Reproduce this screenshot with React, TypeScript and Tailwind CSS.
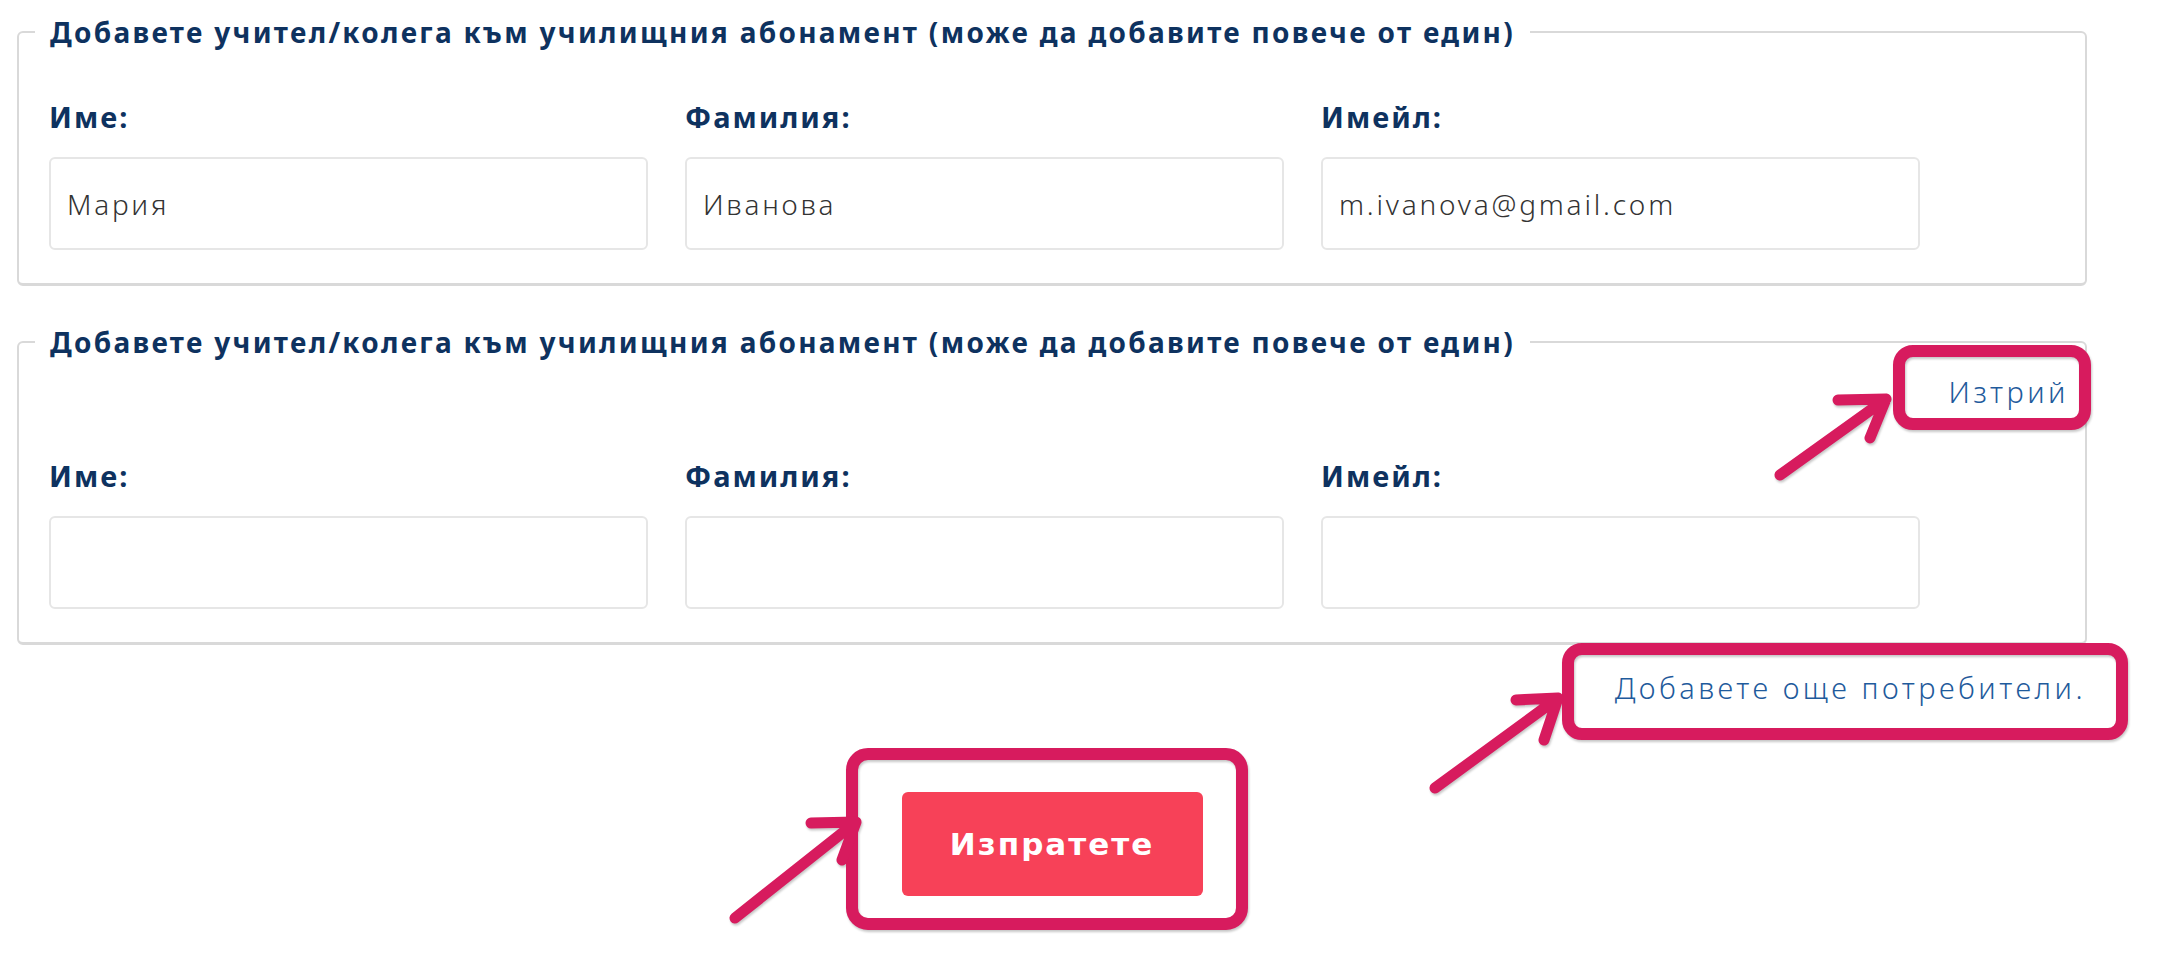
import React from 'react';

const legendText =
  'Добавете учител/колега към училищния абонамент (може да добавите повече от един)';

type Values = { first?: string; last?: string; email?: string };

function Field({ label, value }: { label: string; value?: string }) {
  return (
    <div className="flex flex-col">
      <label className="text-[29px] leading-[36px] font-bold tracking-[2px] text-[#0e325f]">{label}</label>
      <input
        readOnly
        defaultValue={value ?? ''}
        className="mt-[22px] h-[93px] w-full rounded-[6px] border-2 border-[#e6e6e6] bg-white px-[16px] text-[28px] font-light tracking-[2.8px] text-[#333333] outline-none"
      />
    </div>
  );
}

function UserFieldset({ values, removable }: { values: Values; removable?: boolean }) {
  return (
    <fieldset className="rounded-[6px] border-2 border-b-[3px] border-[#d9d9d9] px-[16px] pb-[33px]">
      <legend className="px-[15px] text-[28px] leading-[36px] font-bold tracking-[2.3px] text-[#0e325f]">
        {legendText}
      </legend>
      {removable && (
        <div className="mt-[14px] flex justify-end">
          <a href="#" className="text-[29px] leading-[36px] font-light tracking-[3.5px] text-[#1f5b9c]">
            Изтрий
          </a>
        </div>
      )}
      <div className={`${removable ? 'mt-[48px]' : 'mt-[49px]'} grid grid-cols-[599px_599px_599px] gap-x-[37px] pl-[14px]`}>
        <Field label="Име:" value={values.first} />
        <Field label="Фамилия:" value={values.last} />
        <Field label="Имейл:" value={values.email} />
      </div>
    </fieldset>
  );
}

function Annotations() {
  return (
    <svg
      className="pointer-events-none absolute left-0 top-0 drop-shadow-[1px_2px_1px_rgba(0,0,0,0.22)]"
      width="2177"
      height="962"
      viewBox="0 0 2177 962"
      fill="none"
    >
      <g stroke="#d71b5e" strokeLinecap="round" strokeLinejoin="round">
        <rect x="1899" y="351" width="186" height="73" rx="14" strokeWidth="12" />
        <rect x="1568" y="649" width="554" height="85" rx="14" strokeWidth="12" />
        <rect x="852" y="754" width="390" height="170" rx="16" strokeWidth="12" />
        <path d="M1780 475 L1886 399 M1838 400 L1886 399 L1870 438" strokeWidth="11" />
        <path d="M1435 788 L1558 698 M1516 700 L1558 698 L1544 740" strokeWidth="11" />
        <path d="M735 918 L856 822 M811 823 L856 822 L842 860" strokeWidth="11" />
      </g>
    </svg>
  );
}

export default function App() {
  return (
    <div
      lang="bg"
      className="relative h-[962px] w-[2177px] overflow-hidden bg-white pl-[17px] pt-[14px] font-['Noto_Sans',sans-serif]"
    >
      <div className="flex w-[2070px] flex-col">
        <UserFieldset values={{ first: 'Мария', last: 'Иванова', email: 'm.ivanova@gmail.com' }} />
        <div className="mt-[38px]">
          <UserFieldset values={{}} removable />
        </div>
        <div className="mt-[25px] flex justify-end pr-[1px]">
          <a href="#" className="text-[29px] leading-[36px] font-light tracking-[3.5px] text-[#1f5b9c]">
            Добавете още потребители.
          </a>
        </div>
        <div className="mt-[86px] flex justify-center">
          <button className="h-[104px] w-[301px] rounded-[6px] bg-[#f74158] font-['DejaVu_Sans',sans-serif] text-[31px] font-bold tracking-[2px] text-white">
            Изпратете
          </button>
        </div>
      </div>
      <Annotations />
    </div>
  );
}
